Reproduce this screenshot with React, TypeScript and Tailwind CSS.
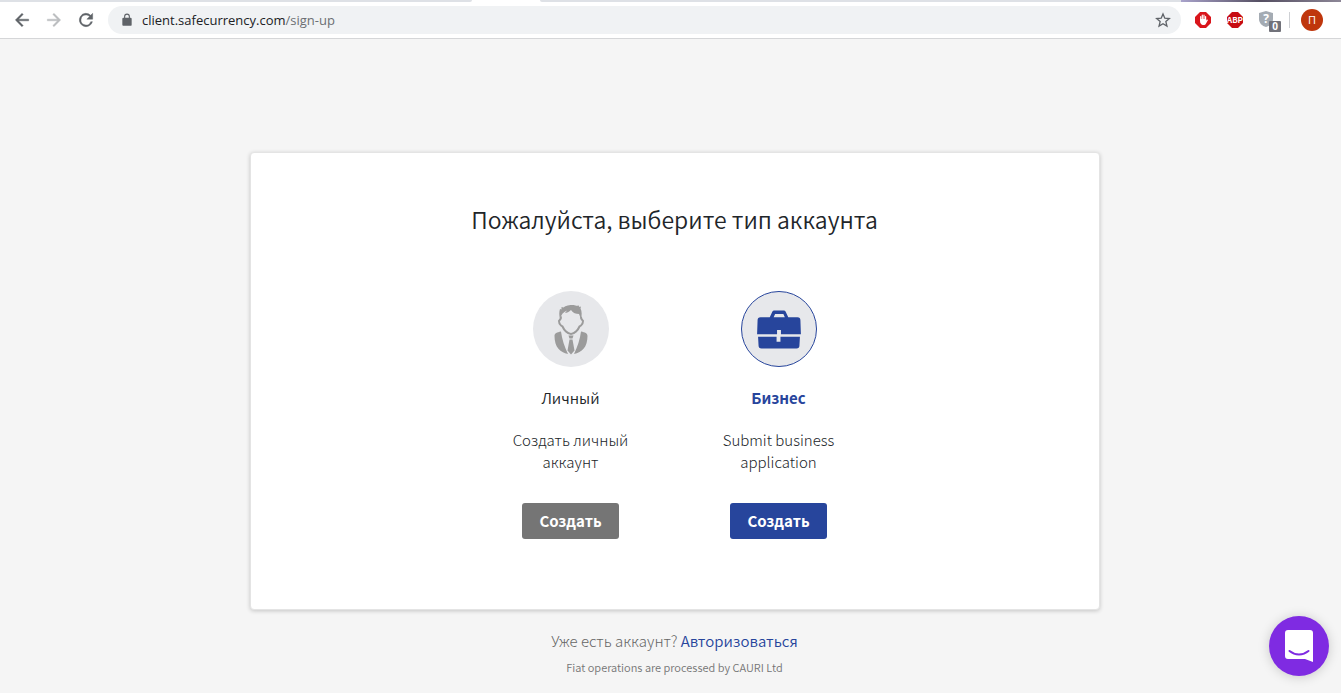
import type { ReactNode } from "react"

type AccountProps = {
  title: string
  description: string
  titleClass: string
  circleClass: string
  buttonClass: string
  icon: ReactNode
}

function PersonIcon() {
  return (
    <svg viewBox="0 0 76 76" className="size-full" fill="#9b9b9b" aria-hidden="true">
      <path d="M27 28c-1-4-1-7 0-10l1.500.5V16l2 .5c2-2 6-2.500 10-2.500l4 1 .5-1 1.500 2 1.500-.5-.5 2c1.500 3 1.500 6.500.5 10.500l-2-5c-3 0-6-1-8-4-2 2-4 3-6 3l2-2.500c-4 1.500-6 4.500-7 8.500z" />
      <path
        d="M28 25.500c.5 2-.5 3-2 4.500 0 2 .500 3.500 2 4.500l1.500 1c1.500 3.500 5 7.500 8.500 7.500s7-4 8.500-7.500l1.500-1c1.500-1 2-2.500 2-4.500-1.500-1.500-2.500-2.500-2-4.500"
        fill="none"
        stroke="#9b9b9b"
        strokeWidth="2"
      />
      <path d="M28 40.500c1 8 3.500 15 7 22.500-8-1.500-13.500-7-13.500-18 0-3 2.500-3.500 6.500-4.500zM48 40.500c-1 8-3.500 15-7 22.500 8-1.500 13.500-7 13.500-18 0-3-2.500-3.500-6.500-4.500z" />
      <path d="M35.500 44.500h5l-1 3h-3zM36.500 48.500h3l2 11-3.500 4-3.500-4z" />
    </svg>
  )
}

function BriefcaseIcon() {
  return (
    <svg viewBox="0 0 76 76" className="size-full" fill="#27459c" aria-hidden="true">
      <path d="M28.500 26l2.500-5.500c.5-1 1.500-1.500 2.500-1.500h9c1 0 2 .5 2.500 1.500l2.500 5.500h9.500c2 0 3 1 3 3l.5 14.500h-20.500V39h-4v4.500H15.500L16 29c0-2 1-3 3-3zM32.500 26h11.500l-1.500-3.500h-8.500z" />
      <path d="M16.500 46h19v5h4v-5h20l-.5 9c0 2-1 3-3 3H20c-2 0-3-1-3-3z" />
    </svg>
  )
}

function Account({ title, description, titleClass, circleClass, buttonClass, icon }: AccountProps) {
  return (
    <section className="flex w-52 flex-col items-center">
      <div className={`size-19 overflow-hidden rounded-full bg-[#e7e8eb] ${circleClass}`}>{icon}</div>
      <h2 className={`mt-[19px] text-[15px] leading-6 ${titleClass}`}>{title}</h2>
      <p className="mt-[19px] h-11 w-32 text-center text-[15px] leading-[22px] font-extralight text-[#212529]">
        {description}
      </p>
      <button
        type="button"
        className={`mt-[30px] h-9 rounded-[3px] px-[17px] text-[15px] font-bold whitespace-nowrap text-white ${buttonClass}`}
      >
        Создать
      </button>
    </section>
  )
}

function BrowserBar() {
  return (
    <header className="border-b border-[#d5d6d8] bg-white">
      <div className="flex h-0.5">
        <div className="w-[472px] rounded-br bg-[#dee1e6]" />
        <div className="w-17" />
        <div className="flex-1 rounded-bl bg-[#dee1e6]" />
        <div className="w-40 bg-linear-to-r from-[#a9a3cb] via-[#554f62] to-[#8d8797]" />
      </div>
      <div className="flex h-9 items-center pr-[18px] pl-3 text-[#5f6368]">
        <button type="button" aria-label="Back" className="size-5">
          <svg viewBox="0 0 24 24" fill="currentColor" stroke="currentColor" strokeWidth=".5">
            <path d="M20 11H7.830l5.590-5.590L12 4l-8 8 8 8 1.410-1.410L7.830 13H20z" />
          </svg>
        </button>
        <button type="button" aria-label="Forward" className="ml-3 size-5 text-[#bbbdbf]">
          <svg viewBox="0 0 24 24" fill="currentColor" stroke="currentColor" strokeWidth=".5">
            <path d="M12 4l-1.410 1.410L16.170 11H4v2h12.170l-5.580 5.590L12 20l8-8z" />
          </svg>
        </button>
        <button type="button" aria-label="Reload" className="ml-3 size-5">
          <svg viewBox="0 0 24 24" fill="currentColor" stroke="currentColor" strokeWidth=".5">
            <path d="M17.650 6.350A8 8 0 1 0 19.730 14h-2.080A6 6 0 1 1 12 6c1.660 0 3.140.69 4.220 1.780L13 11h7V4z" />
          </svg>
        </button>
        <div className="ml-3 flex h-7 min-w-0 flex-1 items-center rounded-full bg-[#f0f2f4] pr-2.5 pl-3">
          <svg viewBox="0 0 24 24" className="size-3.5 shrink-0" fill="currentColor" aria-hidden="true">
            <path d="M18 8h-1V6A5 5 0 0 0 7 6v2H6a2 2 0 0 0-2 2v10c0 1.100.9 2 2 2h12a2 2 0 0 0 2-2V10a2 2 0 0 0-2-2zM8.900 6a3.100 3.100 0 0 1 6.200 0v2H8.900z" />
          </svg>
          <a
            href="#address"
            className="ml-2 font-['Open_Sans',sans-serif] text-[13px] leading-5 text-[#202124]"
          >
            client.safecurrency.com<span className="text-[#6b6f73]">/sign-up</span>
          </a>
          <button type="button" aria-label="Bookmark" className="ml-auto size-4">
            <svg viewBox="0 0 24 24" fill="none" stroke="currentColor" strokeWidth="2">
              <path d="M12 3l2.700 6.300 6.800.6-5.200 4.500 1.600 6.700L12 17.500l-5.900 3.600 1.600-6.700-5.200-4.500 6.800-.6z" />
            </svg>
          </button>
        </div>
        <button type="button" aria-label="AdBlock" className="ml-3.5 size-4">
          <svg viewBox="0 0 16 16">
            <path d="M5 0h6l5 5v6l-5 5H5l-5-5V5z" fill="#d9151b" />
            <path
              d="M5.700 8.500V4.500M7.300 7V3.200M9 7V3.200M10.600 8V4.500"
              fill="none"
              stroke="#fff"
              strokeWidth="1.200"
              strokeLinecap="round"
            />
            <path d="M5.100 7h6.100v1.500l1.200-1 .6.600-2.400 4.200c-.3.500-.8.700-1.400.7H7.800c-1 0-2.700-1.500-2.700-3z" fill="#fff" />
          </svg>
        </button>
        <button type="button" aria-label="Adblock Plus" className="ml-4 size-4">
          <svg viewBox="0 0 16 16">
            <path d="M5 0h6l5 5v6l-5 5H5l-5-5V5z" fill="#c70d12" />
            <text x="8" y="11" textAnchor="middle" fill="#fff" fontSize="8" fontWeight="700" fontFamily="Noto Sans CJK SC, sans-serif">
              ABP
            </text>
          </svg>
        </button>
        <button type="button" aria-label="Protection" className="ml-4 h-[23px] w-[22px]">
          <svg viewBox="0 0 22 23">
            <path d="M7 2l7 2v6c0 4-3 7-7 8-4-1-7-4-7-8V4z" fill="#a4abb3" />
            <text x="7" y="14" textAnchor="middle" fill="#fff" fontSize="12" fontWeight="700" fontFamily="Open Sans, sans-serif">
              ?
            </text>
            <rect x="10" y="12" width="12" height="11" rx="1" fill="#71727a" />
            <text x="16" y="21" textAnchor="middle" fill="#fff" fontSize="10" fontWeight="700" fontFamily="Open Sans, sans-serif">
              0
            </text>
          </svg>
        </button>
        <div className="ml-2 h-4 w-px bg-[#ced0d4]" />
        <button
          type="button"
          aria-label="Profile"
          className="ml-[11px] size-[22px] rounded-full bg-[#bf360c] font-['Open_Sans',sans-serif] text-[11px] leading-[22px] text-white"
        >
          П
        </button>
      </div>
    </header>
  )
}

export default function App() {
  return (
    <div className="flex min-h-screen flex-col bg-[#f5f5f5] font-['Noto_Sans_CJK_SC',sans-serif]">
      <BrowserBar />

      <main className="flex flex-1 flex-col items-center pt-[113px] pl-2">
        <div className="flex w-full max-w-[850px] flex-col items-center rounded border border-[#e4e4e4] bg-white pt-[50px] pb-[70px] shadow-[0_1px_4px_rgba(0,0,0,0.2)]">
          <h1 className="text-center text-[23px] leading-8 font-[350] text-[#212529]">
            Пожалуйста, выберите тип аккаунта
          </h1>

          <div className="mt-14 flex justify-center">
            <Account
              title="Личный"
              description="Создать личный аккаунт"
              titleClass="font-[350] text-[#212529]"
              circleClass=""
              buttonClass="bg-[#757575]"
              icon={<PersonIcon />}
            />
            <Account
              title="Бизнес"
              description="Submit business application"
              titleClass="font-bold text-[#27459c]"
              circleClass="border border-[#27459c]"
              buttonClass="bg-[#27459c]"
              icon={<BriefcaseIcon />}
            />
          </div>
        </div>

        <p className="mt-[19px] text-[15px] leading-6 font-light text-[#666]">
          Уже есть аккаунт?{" "}
          <a href="#login" className="font-[350] text-[#27459c]">
            Авторизоваться
          </a>
        </p>
        <p className="mt-1 text-[11px] leading-5 font-[350] text-[#757575]">
          Fiat operations are processed by CAURI Ltd
        </p>
      </main>

      <button
        type="button"
        aria-label="Open chat"
        className="fixed right-3 bottom-[17px] size-15 rounded-full bg-[#7f2be2] shadow-[0_1px_12px_rgba(0,0,0,0.18)]"
      >
        <svg viewBox="0 0 60 60">
          <path d="M19 14h22a3 3 0 0 1 3 3v29l-8-3H19a3 3 0 0 1-3-3V17a3 3 0 0 1 3-3z" fill="#fff" />
          <path d="M20.500 35c5.500 4.500 13.500 4.500 19 0" fill="none" stroke="#7f2be2" strokeWidth="2" strokeLinecap="round" />
        </svg>
      </button>
    </div>
  )
}
